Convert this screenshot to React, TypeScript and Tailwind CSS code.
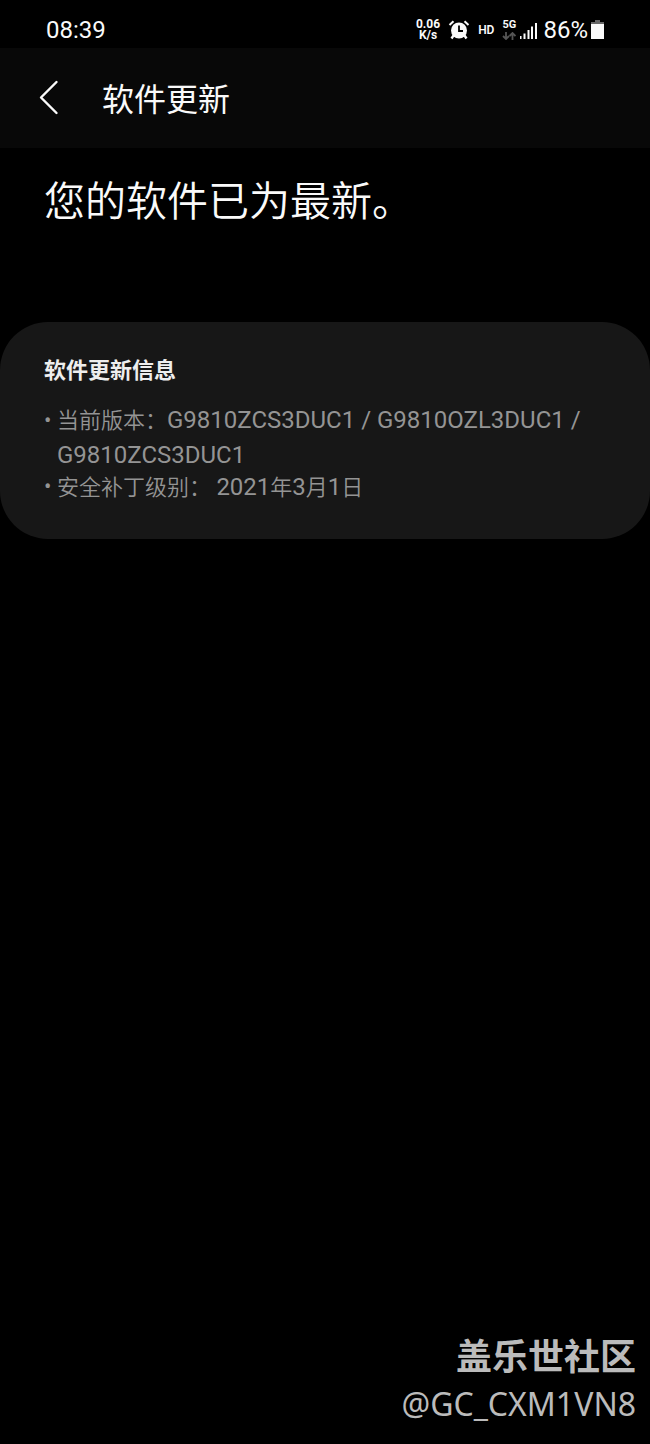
export default function App() {
  return (
    <div className="flex min-h-screen flex-col bg-black font-[Roboto,'Noto_Sans_CJK_SC',sans-serif] text-[#fafafa]">
      <div className="flex h-12 items-center justify-between pr-[46px] pl-[46px] pt-3">
        <span className="text-2xl leading-9">08:39</span>
        <div className="flex items-center">
          <p className="mr-2 text-center text-xs leading-[11px] font-bold">
            0.06<br />K/s
          </p>
          <svg className="mr-2 h-5 w-[22px]" viewBox="0 0 22 20" fill="none" role="img" aria-label="闹钟">
            <circle cx="11" cy="10.5" r="8" fill="#fafafa" />
            <path d="M1.5 5 5.5 1.2M20.5 5 16.5 1.2" stroke="#fafafa" strokeWidth="2" />
            <path d="M5.5 15.5 3.5 18.5M16.5 15.5 18.5 18.5" stroke="#fafafa" strokeWidth="2.4" />
            <path d="M11 5.5V11H15" stroke="#000" strokeWidth="1.8" />
          </svg>
          <span className="mr-2 text-xs leading-4 font-semibold">HD</span>
          <div className="flex flex-col items-center gap-0.5">
            <span className="text-[11px] leading-[10px] font-bold">5G</span>
            <svg className="h-2 w-[14px]" viewBox="0 0 14 8" fill="none" stroke="#555" strokeWidth="1.8" aria-hidden="true">
              <path d="M4 0V7M1 4 4 7 7 4M10.500 8V1M7.500 4 10.500 1 13.500 4" />
            </svg>
          </div>
          <svg className="ml-1 h-[17px] w-[17px]" viewBox="0 0 17 17" fill="#fafafa" role="img" aria-label="信号">
            <path d="M0 14h1.500v3H0zM3.500 11.500h2V17h-2zM7.500 8h2v9h-2zM11 4.500h2V17h-2zM15 1h2v16h-2z" />
          </svg>
          <span className="ml-1.5 text-2xl leading-9">86%</span>
          <svg className="ml-[3px] h-5 w-[13px]" viewBox="0 0 13 20" role="img" aria-label="电池">
            <path d="M4 0h5v2h4v2H0V2h4z" fill="#666" />
            <path d="M0 4h13v15H0z" fill="#fafafa" />
          </svg>
        </div>
      </div>
      <header className="flex h-[100px] items-center bg-[#080808] pl-[38px]">
        <button type="button" aria-label="返回" className="mr-[42px]">
          <svg className="h-9 w-[22px]" viewBox="0 0 22 36" fill="none" stroke="#fafafa" strokeWidth="2.4" strokeLinecap="round" strokeLinejoin="round">
            <path d="M18.500 2 3 17.500 18.500 33" />
          </svg>
        </button>
        <h1 className="pt-1 text-[32px] leading-10">软件更新</h1>
      </header>
      <main>
        <h2 className="px-11 pt-[26px] text-[41px] leading-[56px] font-[350]">您的软件已为最新。</h2>
        <section className="mt-[92px] rounded-[48px] bg-[#171717] px-11 pt-[33px] pb-[38px]">
          <h3 className="text-[22px] leading-8 font-bold text-[#eee]">软件更新信息</h3>
          <ul className="mt-4 text-2xl text-[#949494]">
            <li className="flex leading-[35px]">
              <span className="w-[13px] shrink-0 text-[22px]">•</span>
              <span className="min-w-0"><span className="text-[22px] leading-none font-[350]">当前版本：</span>G9810ZCS3DUC1 / G9810OZL3DUC1 / G9810ZCS3DUC1</span>
            </li>
            <li className="flex leading-7">
              <span className="w-[13px] shrink-0 text-[22px]">•</span>
              <span className="min-w-0">
                <span className="text-[22px] leading-none font-[350]">安全补丁级别： </span>2021<span className="text-[22px] leading-none font-[350]">年</span>3<span className="text-[22px] leading-none font-[350]">月</span>1<span className="text-[22px] leading-none font-[350]">日</span>
              </span>
            </li>
          </ul>
        </section>
      </main>
      <footer className="mt-auto px-3.5 pb-[18px] text-right text-[#bbb]">
        <div className="text-4xl leading-[48px] font-bold">盖乐世社区</div>
        <div className="font-['Noto_Sans',sans-serif] text-[32px] leading-[44px]">@GC_CXM1VN8</div>
      </footer>
    </div>
  );
}
